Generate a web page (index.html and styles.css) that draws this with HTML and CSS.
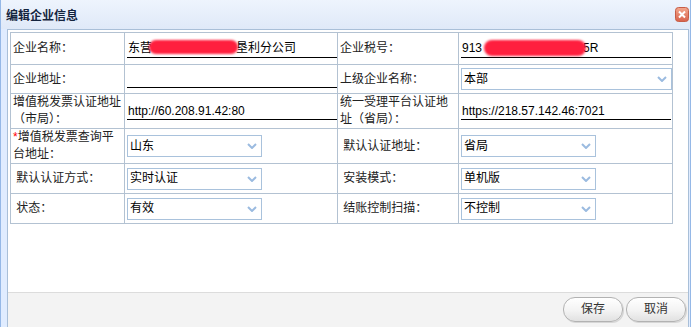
FILE: index.html
```html
<!DOCTYPE html>
<html lang="zh-CN">
<head>
    <meta charset="UTF-8">
    <meta name="viewport" content="width=device-width, initial-scale=1.0">
    <title>编辑企业信息</title>
    <link rel="stylesheet" href="styles.css">
</head>
<body>
    <div class="window">
        <div class="window-header">
            <span class="window-title">编辑企业信息</span>
            <a class="window-close" title="关闭">
                <svg width="14" height="15" viewBox="0 0 14 15">
                    <defs>
                        <linearGradient id="closeBg" x1="0" y1="0" x2="0" y2="1">
                            <stop offset="0" stop-color="#f3a98f"/>
                            <stop offset="1" stop-color="#d8604a"/>
                        </linearGradient>
                    </defs>
                    <rect x="0.5" y="0.5" width="13" height="14" rx="3" fill="url(#closeBg)" stroke="#c65d47"/>
                    <path d="M4 4.5 L10 10.5 M10 4.5 L4 10.5" stroke="#fff" stroke-width="2"/>
                </svg>
            </a>
        </div>
        <div class="window-panel">
            <div class="window-body">
                <table class="form-table">
                    <colgroup>
                        <col class="col-label">
                        <col class="col-value">
                        <col class="col-label2">
                        <col class="col-value2">
                    </colgroup>
                    <tr class="row-first">
                        <td>企业名称：</td>
                        <td><div class="field">东营<span class="redact redact-name"></span>垦利分公司</div></td>
                        <td>企业税号：</td>
                        <td><div class="field">913<span class="redact redact-tax"></span>5R</div></td>
                    </tr>
                    <tr class="row-short">
                        <td>企业地址：</td>
                        <td><input type="text" class="field" value=""></td>
                        <td>上级企业名称：</td>
                        <td>
                            <div class="combo combo-wide">
                                <span class="combo-text">本部</span>
                                <span class="combo-arrow"><svg width="10" height="6" viewBox="0 0 10 6"><path d="M1 1 L5 5 L9 1" fill="none" stroke="#9bbbe0" stroke-width="2"/></svg></span>
                            </div>
                        </td>
                    </tr>
                    <tr class="row-tall">
                        <td>增值税发票认证地址（市局）：</td>
                        <td><input type="text" class="field" value="http://60.208.91.42:80"></td>
                        <td>统一受理平台认证地址（省局）：</td>
                        <td><input type="text" class="field" value="https://218.57.142.46:7021"></td>
                    </tr>
                    <tr class="row-tall">
                        <td><span class="required">*</span>增值税发票查询平台地址：</td>
                        <td>
                            <div class="combo">
                                <span class="combo-text">山东</span>
                                <span class="combo-arrow"><svg width="10" height="6" viewBox="0 0 10 6"><path d="M1 1 L5 5 L9 1" fill="none" stroke="#9bbbe0" stroke-width="2"/></svg></span>
                            </div>
                        </td>
                        <td>&nbsp;默认认证地址：</td>
                        <td>
                            <div class="combo">
                                <span class="combo-text">省局</span>
                                <span class="combo-arrow"><svg width="10" height="6" viewBox="0 0 10 6"><path d="M1 1 L5 5 L9 1" fill="none" stroke="#9bbbe0" stroke-width="2"/></svg></span>
                            </div>
                        </td>
                    </tr>
                    <tr class="row-normal">
                        <td>&nbsp;默认认证方式：</td>
                        <td>
                            <div class="combo">
                                <span class="combo-text">实时认证</span>
                                <span class="combo-arrow"><svg width="10" height="6" viewBox="0 0 10 6"><path d="M1 1 L5 5 L9 1" fill="none" stroke="#9bbbe0" stroke-width="2"/></svg></span>
                            </div>
                        </td>
                        <td>&nbsp;安装模式：</td>
                        <td>
                            <div class="combo">
                                <span class="combo-text">单机版</span>
                                <span class="combo-arrow"><svg width="10" height="6" viewBox="0 0 10 6"><path d="M1 1 L5 5 L9 1" fill="none" stroke="#9bbbe0" stroke-width="2"/></svg></span>
                            </div>
                        </td>
                    </tr>
                    <tr class="row-normal">
                        <td>&nbsp;状态：</td>
                        <td>
                            <div class="combo">
                                <span class="combo-text">有效</span>
                                <span class="combo-arrow"><svg width="10" height="6" viewBox="0 0 10 6"><path d="M1 1 L5 5 L9 1" fill="none" stroke="#9bbbe0" stroke-width="2"/></svg></span>
                            </div>
                        </td>
                        <td>&nbsp;结账控制扫描：</td>
                        <td>
                            <div class="combo">
                                <span class="combo-text">不控制</span>
                                <span class="combo-arrow"><svg width="10" height="6" viewBox="0 0 10 6"><path d="M1 1 L5 5 L9 1" fill="none" stroke="#9bbbe0" stroke-width="2"/></svg></span>
                            </div>
                        </td>
                    </tr>
                </table>
            </div>
            <div class="dialog-button">
                <a class="btn">保存</a>
                <a class="btn">取消</a>
            </div>
        </div>
    </div>
</body>
</html>
```

FILE: styles.css
```css
body {
    margin: 0;
    font-family: "Liberation Sans", "Noto Sans CJK SC", sans-serif;
    font-size: 12px;
    color: #222;
    background: #fff;
}

.window {
    width: 691px;
    height: 327px;
    box-sizing: border-box;
    display: flex;
    flex-direction: column;
    background: #e0ecff;
    border-left: 1px solid #95b8e7;
    border-right: 1px solid #95b8e7;
    padding: 0 1px 0 6px;
}

.window-header {
    height: 29px;
    flex: none;
    display: flex;
    align-items: center;
    justify-content: space-between;
    margin: 0 -1px 0 -6px;
    padding: 0 1px 0 5px;
    background: linear-gradient(#eef4fd, #dfe9f8);
}

.window-title {
    font-weight: bold;
    color: #14243e;
}

.window-close {
    display: flex;
    margin-top: -1px;
    cursor: pointer;
}

.window-panel {
    flex: 1;
    display: flex;
    flex-direction: column;
    background: #fff;
    border: 1px solid #a9bfd8;
    border-bottom: none;
}

.window-body {
    flex: 1;
    padding: 2px;
}

.form-table {
    width: 662px;
    table-layout: fixed;
    border-collapse: collapse;
}

.col-label { width: 114px; }
.col-value { width: 213px; }
.col-label2 { width: 121px; }
.col-value2 { width: 214px; }

/* labels use centred full-width punctuation, as in the original page */
.form-table td {
    border: 1px solid #b3c2d2;
    padding: 0 1px 0 2px;
    font-family: "Liberation Sans", "Noto Sans CJK TC", sans-serif;
    line-height: 17px;
    vertical-align: middle;
}

.row-first td { height: 31px; }
.row-short td { height: 28px; }
.row-tall td { height: 34px; }
.row-normal td { height: 29px; }

.required {
    color: #f00;
}

.field {
    display: block;
    width: 210px;
    height: 18px;
    box-sizing: border-box;
    margin: 0;
    padding: 0 1px;
    border: none;
    border-bottom: 1px solid #000;
    background: transparent;
    font: inherit;
    color: #000;
    line-height: 17px;
    white-space: nowrap;
    outline: none;
}

.redact {
    display: inline-block;
    vertical-align: middle;
    background: #ff1f3e;
    border-radius: 8px;
    filter: blur(0.8px);
}

.redact-name {
    width: 89px;
    height: 14px;
    margin: -2px -2px 0 -3px;
}

.redact-tax {
    width: 102px;
    height: 16px;
    margin: 0 -3px 0 2px;
}

.combo {
    display: flex;
    align-items: center;
    width: 135px;
    height: 22px;
    box-sizing: border-box;
    border: 1px solid #a9c2dc;
    background: #fff;
    color: #000;
}

.combo-wide {
    width: 211px;
}

.combo-text {
    flex: 1;
    padding-left: 2px;
    white-space: nowrap;
}

.combo-arrow {
    width: 18px;
    height: 100%;
    display: flex;
    align-items: center;
    justify-content: center;
}

.dialog-button {
    height: 35px;
    flex: none;
    box-sizing: border-box;
    display: flex;
    justify-content: flex-end;
    align-items: flex-start;
    gap: 3px;
    padding: 4px 2px 0;
    border-top: 1px solid #dcdcdc;
    background: #f3f3f3;
}

.btn {
    width: 60px;
    height: 25px;
    box-sizing: border-box;
    border: 1px solid #b2b2b2;
    border-radius: 12px;
    background: linear-gradient(#ffffff, #f3f3f3 55%, #e1e1e1);
    box-shadow: 1px 1px 0 #d6d6d6;
    text-align: center;
    line-height: 23px;
    color: #333;
    cursor: pointer;
}

.btn:hover {
    background: linear-gradient(#ffffff, #e8eef8);
}
```
